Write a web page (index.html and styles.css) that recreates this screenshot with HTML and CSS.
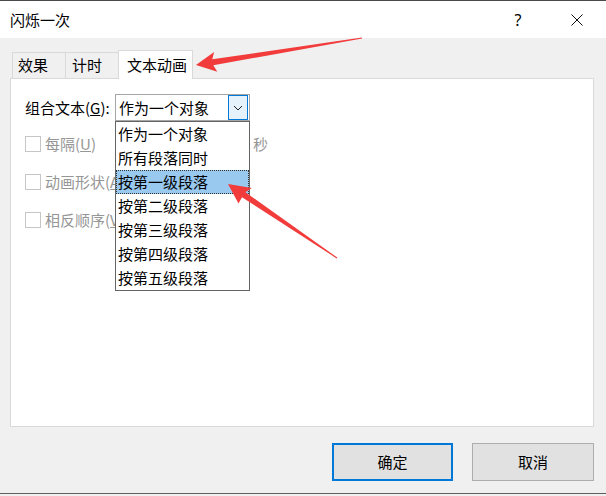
FILE: index.html
```html
<!DOCTYPE html>
<html lang="zh-CN">
<head>
<meta charset="utf-8">
<title>闪烁一次</title>
<link rel="stylesheet" href="styles.css">
</head>
<body>
<div class="window">
  <div class="titlebar">
    <span class="title">闪烁一次</span>
    <span class="help">?</span>
    <span class="close">
      <svg width="12" height="12" viewBox="0 0 12 12"><path d="M0.5 0.5 L11.5 11.5 M11.5 0.5 L0.5 11.5" stroke="#111" stroke-width="1" fill="none"/></svg>
    </span>
  </div>
  <div class="tabs">
    <div class="tab tab-1">效果</div>
    <div class="tab tab-2">计时</div>
    <div class="tab tab-active">文本动画</div>
  </div>
  <div class="panel">
    <div class="combo-row">
      <span class="combo-label">组合文本(<u>G</u>):</span>
      <div class="combo">
        <span class="combo-value">作为一个对象</span>
        <span class="combo-btn">
          <svg width="10" height="6" viewBox="0 0 10 6"><path d="M1 1 L5 5 L9 1" stroke="#222" stroke-width="1" fill="none"/></svg>
        </span>
        <ul class="dropdown">
          <li>作为一个对象</li>
          <li>所有段落同时</li>
          <li class="selected">按第一级段落</li>
          <li>按第二级段落</li>
          <li>按第三级段落</li>
          <li>按第四级段落</li>
          <li>按第五级段落</li>
        </ul>
      </div>
    </div>
    <div class="checks">
      <div class="check-row">
        <span class="box"></span>
        <span class="check-text first">每隔(<u>U</u>)</span>
        <span class="spin"></span>
        <span class="unit">秒</span>
      </div>
      <div class="check-row">
        <span class="box"></span>
        <span class="check-text">动画形状(<u>A</u>)</span>
      </div>
      <div class="check-row">
        <span class="box"></span>
        <span class="check-text">相反顺序(<u>V</u>)</span>
      </div>
    </div>
  </div>
  <div class="buttons">
    <div class="btn btn-default">确定</div>
    <div class="btn">取消</div>
  </div>
</div>
<svg class="annot" width="606" height="496" viewBox="0 0 606 496">
  <polygon fill="#f23c3c" points="196,65 214.1,51.9 212.3,59.3 361.9,37.5 362.1,38.5 213.3,65.3 217.3,71.7"/>
  <polygon fill="#f23c3c" points="228,184 251.8,188.1 245.4,192.2 337.3,257.6 336.7,258.4 242,197.2 238.5,203.5"/>
</svg>
</body>
</html>
```

FILE: styles.css
```css
* { box-sizing: border-box; }
html, body {
  margin: 0;
  padding: 0;
}
body {
  width: 606px;
  height: 496px;
  background: #f0f0f0;
  font-family: "Noto Sans CJK SC", "Noto Sans", sans-serif;
  font-size: 15px;
  color: #000;
  position: relative;
  overflow: hidden;
}
.window {
  height: 494px;
  background: #f0f0f0;
  border-bottom: 1px solid #5f5f5f;
}
.titlebar {
  height: 38px;
  background: #fff;
  border-top: 1px solid #4a4a4a;
  display: flex;
  align-items: center;
  padding-left: 10px;
}
.title {
  font-size: 15px;
  line-height: 20px;
}
.help {
  margin-left: auto;
  width: 46px;
  text-align: center;
  font-family: "Noto Sans", sans-serif;
  font-size: 16px;
  line-height: 20px;
  margin-right: 13px;
}
.close {
  width: 46px;
  margin-right: 6px;
  display: flex;
  justify-content: center;
  align-items: center;
}
.close svg { display: block; }

.tabs {
  margin-top: 12px;
  height: 28px;
  padding-left: 12px;
  display: flex;
  align-items: flex-end;
}
.tab {
  height: 26px;
  line-height: 24px;
  border: 1px solid #d9d9d9;
  border-bottom: none;
  background: #f0f0f0;
  white-space: nowrap;
}
.tab-1 {
  width: 54px;
  padding-left: 5px;
}
.tab-2 {
  width: 54px;
  margin-left: -1px;
  padding-left: 6px;
}
.tab-active {
  width: 75px;
  height: 29px;
  line-height: 27px;
  margin-left: -1px;
  margin-bottom: -1px;
  padding-left: 8px;
  background: #fff;
  position: relative;
  z-index: 1;
}

.panel {
  margin: 0 12px 0 10px;
  height: 349px;
  background: #fff;
  border: 1px solid #d9d9d9;
  padding: 15px 14px;
}
.combo-row {
  display: flex;
  align-items: center;
  height: 27px;
}
.combo-label {
  width: 90px;
  white-space: nowrap;
  line-height: 20px;
}
.combo {
  position: relative;
  width: 135px;
  height: 27px;
  border: 1px solid #a6a6a6;
  display: flex;
  align-items: center;
  background: #fff;
}
.combo-value {
  flex: 1;
  padding-left: 3px;
  line-height: 25px;
  white-space: nowrap;
}
.combo-btn {
  width: 20px;
  height: 25px;
  margin-right: 1px;
  border: 1px solid #0078d7;
  background: #e5f1fb;
  display: flex;
  align-items: center;
  justify-content: center;
}
.combo-btn svg { display: block; }
.dropdown {
  position: absolute;
  top: 26px;
  left: -1px;
  width: 135px;
  margin: 0;
  padding: 0;
  list-style: none;
  background: #fff;
  border: 1px solid #646464;
  z-index: 5;
}
.dropdown li {
  height: 24px;
  line-height: 24px;
  padding-left: 2px;
  white-space: nowrap;
}
.dropdown li.selected {
  background: #99c9ef;
  border: 1px dotted #333;
  line-height: 22px;
  padding-left: 1px;
}

.checks {
  margin-top: 11px;
  display: flex;
  flex-direction: column;
  gap: 14px;
}
.check-row {
  height: 24px;
  display: flex;
  align-items: center;
  color: #969696;
}
.box {
  width: 16px;
  height: 16px;
  border: 1px solid #c6c6c6;
  background: #fff;
  margin-right: 4px;
  flex: none;
}
.check-text {
  white-space: nowrap;
  line-height: 20px;
}
.check-text.first {
  width: 60px;
}
.spin {
  width: 143px;
  height: 22px;
}
.unit {
  margin-left: 5px;
  line-height: 20px;
}

.buttons {
  margin-top: 16px;
  display: flex;
  justify-content: flex-end;
  gap: 19px;
  padding-right: 12px;
}
.btn {
  width: 122px;
  height: 38px;
  border: 1px solid #adadad;
  background: #e1e1e1;
  display: flex;
  align-items: center;
  justify-content: center;
  line-height: 20px;
}
.btn-default {
  width: 121px;
  border: 2px solid #0078d7;
}

.annot {
  position: absolute;
  top: 0;
  left: 0;
  pointer-events: none;
  z-index: 10;
}
```
